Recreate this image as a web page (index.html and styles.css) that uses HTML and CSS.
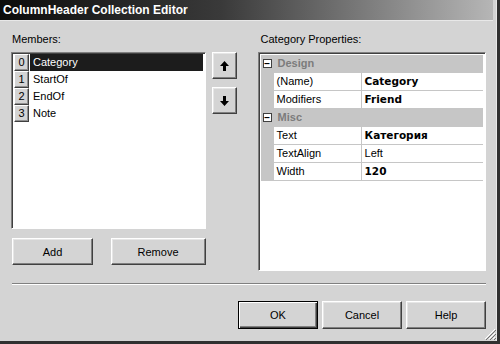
FILE: index.html
```html
<!DOCTYPE html>
<html lang="en">
<head>
  <meta charset="UTF-8" />
  <title>ColumnHeader Collection Editor</title>
  <link rel="stylesheet" href="styles.css">
</head>
<body>
  <div class="window">
    <div class="titlebar">ColumnHeader Collection Editor</div>
    <div class="content">
      <div class="panes">
        <div class="members">
          <div class="label">Members:</div>
          <div class="listbox">
            <div class="item selected"><span class="idx">0</span><span class="name">Category</span></div>
            <div class="item"><span class="idx">1</span><span class="name">StartOf</span></div>
            <div class="item"><span class="idx">2</span><span class="name">EndOf</span></div>
            <div class="item"><span class="idx">3</span><span class="name">Note</span></div>
          </div>
          <div class="member-buttons">
            <button class="btn add">Add</button>
            <button class="btn remove">Remove</button>
          </div>
        </div>
        <div class="arrows">
          <button class="btn arrow">
            <svg width="9" height="10" viewBox="0 0 9 10"><path d="M4.5 0 L9 5 L6 5 L6 10 L3 10 L3 5 L0 5 Z" fill="#000"/></svg>
          </button>
          <button class="btn arrow">
            <svg width="9" height="10" viewBox="0 0 9 10"><path d="M4.5 10 L9 5 L6 5 L6 0 L3 0 L3 5 L0 5 Z" fill="#000"/></svg>
          </button>
        </div>
        <div class="props">
          <div class="label">Category Properties:</div>
          <div class="grid">
            <div class="cat"><span class="toggle">&minus;</span>Design</div>
            <div class="row"><span class="key">(Name)</span><span class="val bold">Category</span></div>
            <div class="row"><span class="key">Modifiers</span><span class="val bold">Friend</span></div>
            <div class="cat"><span class="toggle">&minus;</span>Misc</div>
            <div class="row"><span class="key">Text</span><span class="val bold">Категория</span></div>
            <div class="row"><span class="key">TextAlign</span><span class="val">Left</span></div>
            <div class="row"><span class="key">Width</span><span class="val bold">120</span></div>
          </div>
        </div>
      </div>
      <div class="separator"></div>
      <div class="dialog-buttons">
        <button class="btn default">OK</button>
        <button class="btn">Cancel</button>
        <button class="btn">Help</button>
      </div>
    </div>
    <svg class="grip" width="12" height="12" viewBox="0 0 12 12">
      <path d="M11 1 L1 11 M11 5 L5 11 M11 9 L9 11" stroke="#fff" stroke-width="1"/>
      <path d="M12 2 L2 12 M12 6 L6 12 M12 10 L10 12" stroke="#707070" stroke-width="1"/>
    </svg>
  </div>
</body>
</html>
```

FILE: styles.css
```css
body { margin: 0; background: #d4d4d4; font-family: "Liberation Sans", Arial, sans-serif; font-size: 11px; color: #000; }
.window {
  position: relative;
  width: 500px;
  height: 344px;
  box-sizing: border-box;
  background: #d4d4d4;
  border-right: 3px solid #303030;
  border-bottom: 3px solid #303030;
  box-shadow: inset -4px 0 0 -3px #e8e8e8;
}
.titlebar {
  height: 20px;
  line-height: 20px;
  padding-left: 3px;
  margin-right: 4px;
  color: #fff;
  font-weight: bold;
  font-size: 12px;
  background: linear-gradient(to right, #0c0c0c, #3a3a3a 45%, #b6b6b6);
  border-bottom: 1px solid #e8e8e8;
}
.content { padding: 12px 11px 0 11px; }
.panes { display: flex; }
.label { height: 19px; padding-left: 1px; }
.members { width: 195px; display: flex; flex-direction: column; }
.listbox {
  height: 174px;
  background: #fff;
  border: 1px solid;
  border-color: #808080 #fff #fff #808080;
  box-shadow: inset 1px 1px #404040;
  padding: 1px 0 0 2px;
  box-sizing: content-box;
}
.item { display: flex; height: 17px; line-height: 17px; }
.idx {
  width: 13px;
  height: 15px;
  line-height: 15px;
  text-align: center;
  background: #d4d4d4;
  border: 1px solid;
  border-color: #fff #404040 #404040 #fff;
  box-shadow: inset -1px -1px #909090;
  flex: none;
}
.name { flex: 1; padding-left: 3px; margin-left: 1px; margin-right: 2px; }
.selected .name { background: #1c1c1c; color: #fff; }
.btn {
  font-family: "Liberation Sans", Arial, sans-serif;
  font-size: 11px;
  color: #000;
  background: #d4d4d4;
  border: 1px solid;
  border-color: #fff #404040 #404040 #fff;
  box-shadow: inset -1px -1px #808080, inset 1px 1px #e6e6e6;
  padding: 0;
  height: 27px;
}
.member-buttons { display: flex; justify-content: space-between; margin-top: 9px; padding-left: 1px; }
.add { width: 81px; }
.remove { width: 95px; }
.arrows { display: flex; flex-direction: column; gap: 8px; margin-left: 6px; padding-top: 19px; }
.arrow { width: 25px; height: 27px; display: flex; align-items: center; justify-content: center; }
.props { margin-left: 21px; width: 229px; display: flex; flex-direction: column; }
.props .label { padding-left: 3px; }
.grid {
  height: 215px;
  background: #fff;
  border: 1px solid;
  border-color: #808080 #fff #fff #808080;
  box-shadow: inset 1px 1px #404040;
  padding: 2px 2px 0 2px;
}
.cat {
  height: 17px;
  line-height: 17px;
  background: #c6c6c6;
  color: #7c7c7c;
  font-weight: bold;
  display: flex;
  align-items: center;
  border-bottom: 1px solid #c6c6c6;
}
.toggle {
  width: 9px;
  height: 9px;
  line-height: 8px;
  box-sizing: border-box;
  border: 1px solid #404040;
  background: #fff;
  color: #000;
  font-size: 10px;
  text-align: center;
  margin: 0 6px 0 2px;
}
.row {
  display: flex;
  height: 17px;
  line-height: 17px;
  border-left: 13px solid #c6c6c6;
  border-bottom: 1px solid #c6c6c6;
}
.key { width: 84px; padding-left: 3px; border-right: 1px solid #c6c6c6; }
.val { flex: 1; padding-left: 3px; }
.bold { font-weight: bold; font-family: "DejaVu Sans", Verdana, sans-serif; font-size: 10.5px; }
.separator { margin: 12px 0 0 1px; border-top: 1px solid #808080; border-bottom: 1px solid #fff; }
.dialog-buttons { display: flex; justify-content: flex-end; gap: 4px; margin-top: 16px; }
.dialog-buttons .btn { width: 80px; height: 28px; }
.dialog-buttons .default { border: 1px solid #000; box-shadow: inset 1px 1px #fff, inset -1px -1px #404040, inset -2px -2px #808080; }
.grip { position: absolute; right: 1px; bottom: 1px; }
```
